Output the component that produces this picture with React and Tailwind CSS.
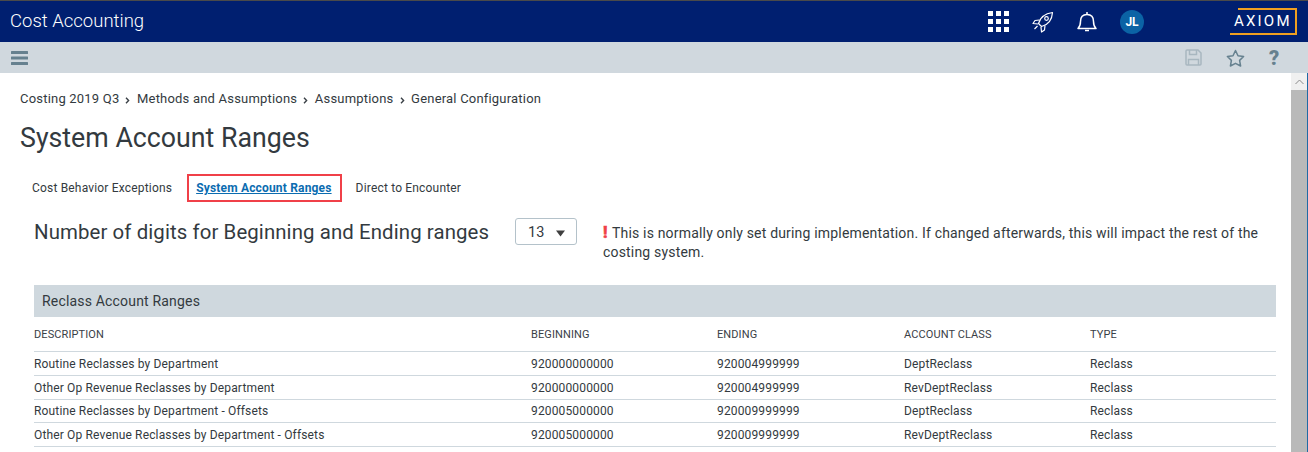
import React from "react";

const rows = [
  ["Routine Reclasses by Department", "920000000000", "920004999999", "DeptReclass", "Reclass"],
  ["Other Op Revenue Reclasses by Department", "920000000000", "920004999999", "RevDeptReclass", "Reclass"],
  ["Routine Reclasses by Department - Offsets", "920005000000", "920009999999", "DeptReclass", "Reclass"],
  ["Other Op Revenue Reclasses by Department - Offsets", "920005000000", "920009999999", "RevDeptReclass", "Reclass"],
];
const gridCols = "grid grid-cols-[497px_186px_187px_186px_1fr]";

function Chevron() {
  return (
    <svg width="5" height="7" viewBox="0 0 5 7" className="ml-[6px] mr-[6.600px] mt-[2px] shrink-0">
      <path d="M1 .8 3.600 3.500 1 6.200" fill="none" stroke="#3a4046" strokeWidth="1.400" />
    </svg>
  );
}

export default function App() {
  return (
    <div className="w-[1308px] h-[452px] overflow-hidden flex flex-col bg-white text-[#333a40] font-['Roboto',sans-serif]">
      <header className="h-[42px] shrink-0 border-t border-[#4a4a4a] bg-[#001f70] flex items-center text-white">
        <div className="ml-[10px] text-[18.500px] font-light leading-none">Cost Accounting</div>
        <div className="ml-auto flex items-center">
          <svg width="21" height="21" viewBox="0 0 21 21" fill="#fff" className="mr-[23px]">
            {[0, 8, 16].flatMap((y) =>
              [0, 8, 16].map((x) => <rect key={`${x}-${y}`} x={x} y={y} width="5" height="5" />)
            )}
          </svg>
          <svg width="22" height="22" viewBox="0 0 22 22" fill="none" stroke="#fff" strokeWidth="1.200" strokeLinejoin="round" className="mr-[23px]">
            <path d="M6.500 12.500C8 7 13 2.500 20.500 1.500 20 9 15.500 14 9.500 15.500Z" />
            <circle cx="14.500" cy="7.500" r="1.800" />
            <path d="M7.500 9 3 9.500 1 12.500 6 13M13 14.500 12.500 19 9.500 21 9 16M5.500 15 2.500 18" />
          </svg>
          <svg width="20" height="22" viewBox="0 0 20 22" fill="none" stroke="#fff" strokeWidth="1.500" className="mr-[23px]">
            <path d="M1 17.500C3 15.500 3.500 14 3.500 10.500 3.500 6 6 3.500 10 3.500S16.500 6 16.500 10.500C16.500 14 17 15.500 19 17.500Z" strokeLinejoin="round" />
            <path d="M10 1v2.500M8 19.500h4" />
          </svg>
          <div className="w-[24px] h-[24px] rounded-full bg-[#0b63a5] flex items-center justify-center text-[12px] font-bold mr-[164px]">JL</div>
        </div>
      </header>
      <div className="relative">
        <div className="absolute right-[11px] top-[-34px] w-[67px] h-[27px] pointer-events-none">
          <div className="absolute top-0 right-0 h-full w-[59px] border-t-2 border-r-2 border-[#f0a020]" />
          <div className="absolute bottom-0 right-0 w-full h-[2px] bg-[#f0a020]" />
          <div className="absolute left-[4px] top-[7px] text-[15px] leading-[13px] tracking-[2.200px] text-white font-normal">AXIOM</div>
        </div>
      </div>
      <div className="h-[31px] shrink-0 bg-[#d0d8de] flex items-center">
        <svg width="17" height="14" viewBox="0 0 17 14" fill="#66818f" className="ml-[11px]">
          <rect y="0" width="17" height="3" rx=".5" />
          <rect y="5.500" width="17" height="3" rx=".5" />
          <rect y="11" width="17" height="3" rx=".5" />
        </svg>
        <div className="ml-auto flex items-center">
          <svg width="17" height="17" viewBox="0 0 17 17" fill="none" stroke="#a8b7c0" strokeWidth="1.500" className="mr-[24px]">
            <path d="M1 2a1 1 0 0 1 1-1h11l3 3v11a1 1 0 0 1-1 1H2a1 1 0 0 1-1-1Z" />
            <path d="M4.500 1v4.500h7V1M3.500 16v-5.500h10V16" />
          </svg>
          <svg width="19" height="18" viewBox="0 0 19 18" fill="none" stroke="#66818f" strokeWidth="1.500" strokeLinejoin="round" className="mr-[24px]">
            <path d="M9.500 1.500 12 6.700l5.600.8-4 3.900 1 5.600-5.100-2.700L4.400 17l1-5.600-4-3.900 5.600-.8Z" />
          </svg>
          <div className="w-[10px] mr-[29px] text-[#66818f] text-[20px] leading-none font-black">?</div>
        </div>
      </div>
      <div className="flex-1 flex min-h-0">
        <main className="flex-1 min-w-0 pl-[20px]">
          <nav className="flex items-center mt-[18px] text-[13px] leading-[16px] tracking-[0.2px]">
            <span>Costing 2019 Q3</span>
            <Chevron />
            <span>Methods and Assumptions</span>
            <Chevron />
            <span>Assumptions</span>
            <Chevron />
            <span>General Configuration</span>
          </nav>
          <h1 className="mt-[15px] text-[26.750px] leading-[32px] font-normal">System Account Ranges</h1>
          <div className="flex items-center mt-[20px] ml-[12px] h-[28px] text-[12px] tracking-[0.18px]">
            <span className="mr-[15px]">Cost Behavior Exceptions</span>
            <span className="h-[28px] pl-[7px] pr-[8px] flex items-center border-2 border-[#f04048] text-[#0b6cb0] font-bold underline mr-[14px]">System Account Ranges</span>
            <span>Direct to Encounter</span>
          </div>
          <section className="ml-[14px] mr-[15px]">
            <div className="flex items-start mt-[16px] h-[60px]">
              <div className="w-[481px] text-[20.400px] leading-[26px] mt-[1px] tracking-[0.1px]">Number of digits for Beginning and Ending ranges</div>
              <div className="w-[62px] h-[27px] rounded-[3px] border border-[#b4c2ca] flex items-center text-[14.500px] pl-[12px] pt-[3px]">
                13
                <svg width="9" height="7" viewBox="0 0 9 7" className="ml-[12px]"><path d="M0 .5h9L4.500 6.500Z" fill="#3f3f3f" /></svg>
              </div>
              <p className="ml-[26px] flex-1 text-[14px] leading-[19px] mt-[6px] tracking-[0.18px]">
                <span className="inline-block w-[9px] text-[#f04048] font-black text-[16px] leading-[14px] [-webkit-text-stroke:0.5px_#f04048]">!</span>This is normally only set during implementation. If changed afterwards, this will impact the rest of the costing system.
              </p>
            </div>
            <div className="mt-[7px] h-[32px] bg-[#cfd8de] flex items-center pl-[8px] text-[14px] tracking-[0.18px]">Reclass Account Ranges</div>
            <div className={`${gridCols} h-[35px] pt-[3px] items-center border-b border-[#cfd8de] text-[11px] tracking-[0.1px] text-[#3a4046]`}>
              <span>DESCRIPTION</span><span>BEGINNING</span><span>ENDING</span><span>ACCOUNT CLASS</span><span>TYPE</span>
            </div>
            {rows.map((r, i) => (
              <div key={i} className={`${gridCols} h-[23.750px] pt-[1px] items-center border-b border-[#cfd8de] text-[12px] tracking-[0.15px]`}>
                {r.map((c, j) => <span key={j}>{c}</span>)}
              </div>
            ))}
          </section>
        </main>
        <div className="w-[17px] shrink-0 flex flex-col border-r border-[#1f6aa5] bg-[#b9b9b9]">
          <div className="h-[17px] bg-[#f0f0f0] flex items-center justify-center">
            <svg width="9" height="6" viewBox="0 0 9 6" fill="none" stroke="#8a8a8a" strokeWidth="1"><path d="M.5 5 4.500 1l4 4" /></svg>
          </div>
        </div>
      </div>
    </div>
  );
}
